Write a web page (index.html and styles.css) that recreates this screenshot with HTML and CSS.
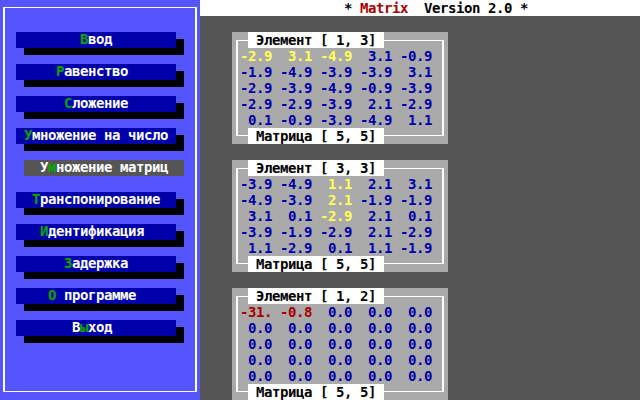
FILE: index.html
```html
<!DOCTYPE html>
<html lang="ru">
<head>
<meta charset="utf-8">
<title>Matrix Version 2.0</title>
<link rel="stylesheet" href="styles.css">
</head>
<body>
<div class="screen">
  <aside class="menu">
    <div class="menu-frame">
      <div class="btn"><span class="hot">В</span>вод</div>
      <div class="btn"><span class="hot">Р</span>авенство </div>
      <div class="btn"><span class="hot">С</span>ложение</div>
      <div class="btn"><span class="hot">У</span>множение на число</div>
      <div class="btn btn-active">У<span class="hot">м</span>ножение матриц</div>
      <div class="btn"><span class="hot">Т</span>ранспонирование</div>
      <div class="btn"><span class="hot">И</span>дентификация </div>
      <div class="btn"><span class="hot">З</span>адержка</div>
      <div class="btn"><span class="hot">О</span> программе </div>
      <div class="btn">В<span class="hot">ы</span>ход </div>
    </div>
  </aside>
  <main class="work">
    <header class="titlebar">* <span class="red">Matrix</span>  Version 2.0 *</header>
    <div class="panels">
      <section class="panel">
        <div class="ptitle">Элемент [ 1, 3]</div>
        <div class="grid">
          <span class="y">-2.9</span><span class="y">3.1</span><span class="y">-4.9</span><span>3.1</span><span>-0.9</span>
          <span>-1.9</span><span>-4.9</span><span>-3.9</span><span>-3.9</span><span>3.1</span>
          <span>-2.9</span><span>-3.9</span><span>-4.9</span><span>-0.9</span><span>-3.9</span>
          <span>-2.9</span><span>-2.9</span><span>-3.9</span><span>2.1</span><span>-2.9</span>
          <span>0.1</span><span>-0.9</span><span>-3.9</span><span>-4.9</span><span>1.1</span>
        </div>
        <div class="ptitle">Матрица [ 5, 5]</div>
      </section>
      <section class="panel">
        <div class="ptitle">Элемент [ 3, 3]</div>
        <div class="grid">
          <span>-3.9</span><span>-4.9</span><span class="y">1.1</span><span>2.1</span><span>3.1</span>
          <span>-4.9</span><span>-3.9</span><span class="y">2.1</span><span>-1.9</span><span>-1.9</span>
          <span>3.1</span><span>0.1</span><span class="y">-2.9</span><span>2.1</span><span>0.1</span>
          <span>-3.9</span><span>-1.9</span><span>-2.9</span><span>2.1</span><span>-2.9</span>
          <span>1.1</span><span>-2.9</span><span>0.1</span><span>1.1</span><span>-1.9</span>
        </div>
        <div class="ptitle">Матрица [ 5, 5]</div>
      </section>
      <section class="panel">
        <div class="ptitle">Элемент [ 1, 2]</div>
        <div class="grid">
          <span class="r">-31.</span><span class="r">-0.8</span><span>0.0</span><span>0.0</span><span>0.0</span>
          <span>0.0</span><span>0.0</span><span>0.0</span><span>0.0</span><span>0.0</span>
          <span>0.0</span><span>0.0</span><span>0.0</span><span>0.0</span><span>0.0</span>
          <span>0.0</span><span>0.0</span><span>0.0</span><span>0.0</span><span>0.0</span>
          <span>0.0</span><span>0.0</span><span>0.0</span><span>0.0</span><span>0.0</span>
        </div>
        <div class="ptitle">Матрица [ 5, 5]</div>
      </section>
    </div>
  </main>
</div>
</body>
</html>
```
FILE: styles.css
```css
* { box-sizing: border-box; }

html, body {
  margin: 0;
  padding: 0;
  width: 640px;
  height: 400px;
  overflow: hidden;
  background: #555555;
}

.screen {
  display: flex;
  width: 640px;
  height: 400px;
  font-family: "DejaVu Sans Mono", "Liberation Mono", monospace;
  font-weight: bold;
  font-size: 14px;
  letter-spacing: -0.4287px;
  line-height: 16px;
}

/* ---------- left menu ---------- */
.menu {
  width: 200px;
  height: 400px;
  flex: none;
  background: #5555ff;
  padding: 7px 3px 8px 3px;
}

.menu-frame {
  height: 100%;
  border-style: solid;
  border-color: #ffffff;
  border-width: 1px 2px;
  padding: 24px 0 0 11px;
  display: flex;
  flex-direction: column;
  align-items: flex-start;
  gap: 16px;
}

.btn {
  width: 160px;
  height: 16px;
  line-height: 14px;
  background: #0000aa;
  color: #ffffff;
  text-align: center;
  white-space: pre;
  box-shadow: 8px 7px 0 #000000;
}

.btn-active {
  margin-left: 8px;
  background: #555555;
  box-shadow: none;
}

.hot { color: #00aa00; }

/* ---------- right work area ---------- */
.work {
  flex: 1;
  display: flex;
  flex-direction: column;
  background: #555555;
}

.titlebar {
  height: 16px;
  background: #ffffff;
  color: #000000;
  white-space: pre;
  padding-left: 144px;
}

.red { color: #aa0000; }

.panels {
  display: flex;
  flex-direction: column;
  gap: 16px;
  padding: 16px 0 0 32px;
}

.panel {
  position: relative;
  width: 216px;
  height: 112px;
  background: #aaaaaa;
  display: flex;
  flex-direction: column;
  align-items: flex-start;
}

.panel::before {
  content: "";
  position: absolute;
  top: 8px;
  bottom: 8px;
  left: 4px;
  right: 4px;
  border-style: solid;
  border-color: #ffffff;
  border-width: 1px 2px;
}

.ptitle {
  position: relative;
  height: 16px;
  margin-left: 16px;
  padding: 0 8px;
  background: #ffffff;
  color: #000000;
  white-space: pre;
}

.grid {
  position: relative;
  margin-left: 8px;
  display: grid;
  grid-template-columns: repeat(5, 32px);
  grid-auto-rows: 16px;
  column-gap: 8px;
  color: #0000aa;
  text-align: right;
  white-space: pre;
}

.grid .y { color: #ffff55; }
.grid .r { color: #aa0000; }
```
